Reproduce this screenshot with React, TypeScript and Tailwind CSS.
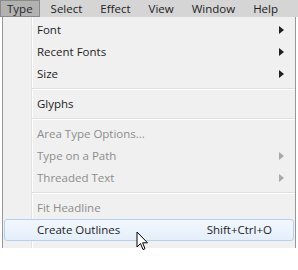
type Item =
  | { kind: "item"; label: string; sub?: boolean; disabled?: boolean; shortcut?: string; active?: boolean }
  | { kind: "sep" };

const items: Item[] = [
  { kind: "item", label: "Font", sub: true },
  { kind: "item", label: "Recent Fonts", sub: true },
  { kind: "item", label: "Size", sub: true },
  { kind: "sep" },
  { kind: "item", label: "Glyphs" },
  { kind: "sep" },
  { kind: "item", label: "Area Type Options...", disabled: true },
  { kind: "item", label: "Type on a Path", sub: true, disabled: true },
  { kind: "item", label: "Threaded Text", sub: true, disabled: true },
  { kind: "sep" },
  { kind: "item", label: "Fit Headline", disabled: true },
  { kind: "item", label: "Create Outlines", shortcut: "Shift+Ctrl+O", active: true },
  { kind: "item", label: "Find Font..." },
];

const menus = ["Type", "Select", "Effect", "View", "Window", "Help"];

function Arrow({ disabled }: { disabled?: boolean }) {
  return (
    <svg width="5" height="8" viewBox="0 0 5 8" className="ml-auto">
      <path d="M0 0 L5 4 L0 8 Z" fill={disabled ? "#a8a8a8" : "#202020"} />
    </svg>
  );
}

// windows arrow cursor
function Cursor() {
  return (
    <svg width="13" height="21" viewBox="0 0 13 21" className="absolute left-[136px] top-[231px]">
      <path
        d="M1 1 L1 16 L4.5 12.5 L7 18.5 L9 17.7 L6.6 11.8 L11.5 11.8 Z"
        fill="white"
        stroke="black"
        strokeWidth="1"
        strokeLinejoin="miter"
      />
    </svg>
  );
}

export default function App() {
  return (
    <div
      className="relative h-[270px] w-[298px] overflow-hidden bg-white text-[11.5px] text-[#1e1e1e]"
      style={{ fontFamily: '"Open Sans", "Noto Sans", sans-serif' }}
    >
      {/* menu bar */}
      <div className="flex h-[17px] items-center bg-[#d5d5d5] text-[#222]">
        {menus.map((m, i) => (
          <div
            key={m}
            className={
              i === 0
                ? "mr-[2px] flex h-[17px] items-center border border-[#8a8a8a] bg-[#b2b2b2] pl-[6px] pr-[6px] text-[#2a2a2a]"
                : "px-[9px]"
            }
          >
            {m}
          </div>
        ))}
      </div>

      {/* dropdown */}
      <div className="ml-[2px] h-[231px] w-[294px] overflow-hidden border-x border-[#979797] bg-[#f0f0f0]">
        <div className="relative pt-[2px]">
          <div className="absolute bottom-0 left-[28px] top-0 w-[1px] bg-[#e2e3e3]" />
          <div className="absolute bottom-0 left-[29px] top-0 w-[1px] bg-white" />
          {items.map((it, idx) =>
            it.kind === "sep" ? (
              <div key={idx} className="relative ml-[29px] flex h-[8px] flex-col justify-center">
                <div className="h-[1px] bg-[#e0e0e0]" />
                <div className="h-[1px] bg-white" />
              </div>
            ) : (
              <div
                key={idx}
                className={
                  "relative mx-[1px] flex h-[22px] items-center pl-[32px] pr-[9px] " +
                  (it.active
                    ? "rounded-[3px] border border-[#b7d0ec] bg-gradient-to-b from-[#f2f7fd] to-[#e4effb]"
                    : "border border-transparent") +
                  (it.disabled ? " text-[#8d8d8d]" : "")
                }
              >
                <span>{it.label}</span>
                {it.shortcut && <span className="ml-auto pr-[12px]">{it.shortcut}</span>}
                {it.sub && <Arrow disabled={it.disabled} />}
              </div>
            )
          )}
        </div>
      </div>

      <Cursor />
    </div>
  );
}
